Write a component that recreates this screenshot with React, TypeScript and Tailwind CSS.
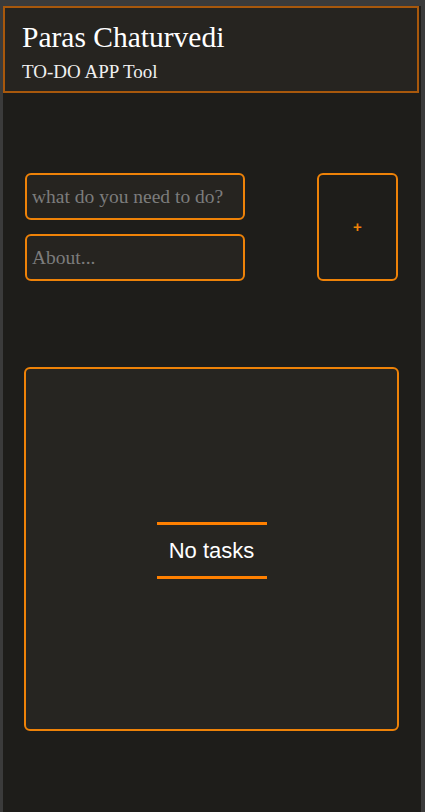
import React from "react";

export default function App() {
  return (
    <div className="w-[425px] h-[812px] bg-[#3b3b3b] pt-[6px] pl-[3px] pr-[4px] flex flex-col" style={{ fontFamily: '"Liberation Serif", serif' }}>
      <div className="flex-1 flex flex-col bg-[#1e1d1a]">
        <header className="h-[87px] w-[416px] border-2 border-[#a8580c] bg-[#262420] pl-[17px] pt-[11px]">
          <h1 className="text-[29.5px] leading-[36px] text-white">Paras Chaturvedi</h1>
          <p className="text-[19px] leading-[24px] text-[#f0f0f0] mt-[5px]">TO-DO APP Tool</p>
        </header>
        <div className="flex pl-[22px] pt-[80px]">
          <div className="flex flex-col gap-[14px]">
            <input
              placeholder="what do you need to do?"
              className="w-[220px] h-[47px] rounded-[6px] border-2 border-[#ee8208] bg-[#262420] px-[5px] text-[19.5px] text-white placeholder:text-[#7c7c7c] outline-none"
            />
            <input
              placeholder="About..."
              className="w-[220px] h-[47px] rounded-[6px] border-2 border-[#ee8208] bg-[#262420] px-[5px] text-[19.5px] text-white placeholder:text-[#7c7c7c] outline-none"
            />
          </div>
          <button className="ml-[72px] w-[81px] h-[108px] rounded-[6px] border-2 border-[#ee8208] bg-[#1e1d1a] text-[#ee8208] text-[15px] font-bold" style={{ fontFamily: '"Liberation Sans", sans-serif' }}>
            +
          </button>
        </div>
        <div className="ml-[21px] mt-[86px] w-[375px] h-[364px] rounded-[6px] border-2 border-[#ee8208] bg-[#262521] flex items-center justify-center">
          <div className="flex flex-col items-center mt-[3px]">
            <div className="w-[110px] h-[3px] bg-[#ff8000]" />
            <div className="text-[22px] leading-[26px] text-white pt-[13px] pb-[12px]" style={{ fontFamily: '"Liberation Sans", sans-serif' }}>No tasks</div>
            <div className="w-[110px] h-[3px] bg-[#ff8000]" />
          </div>
        </div>
      </div>
    </div>
  );
}
